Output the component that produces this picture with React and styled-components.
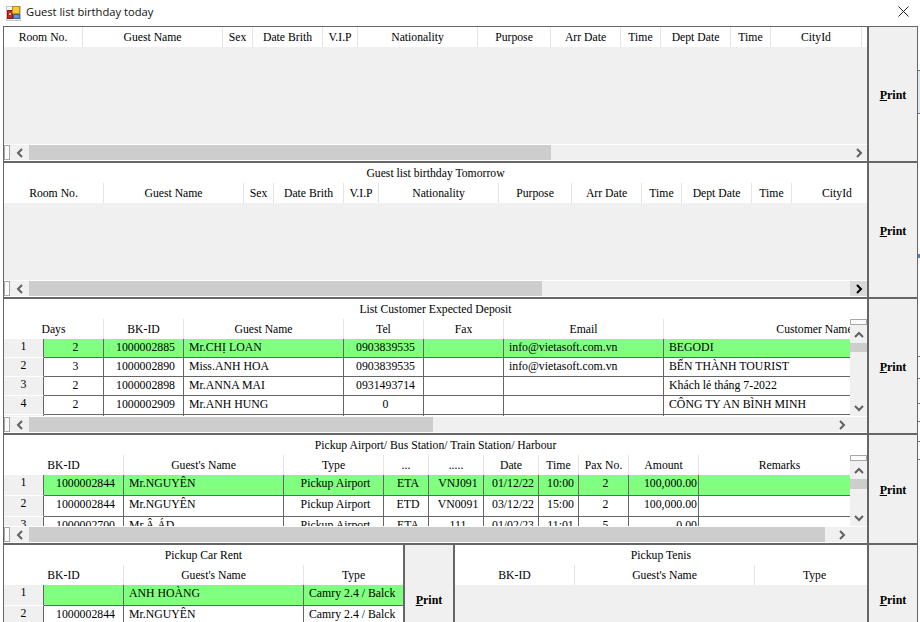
import React from 'react'
import styled, { createGlobalStyle } from 'styled-components'

const GlobalStyle = createGlobalStyle`
  html, body { margin: 0; padding: 0; background: #fff; }
  * { box-sizing: border-box; }
`

const customerRows = [
  ['1', '2', '1000002885', 'Mr.CHỊ LOAN', '0903839535', '', 'info@vietasoft.com.vn', 'BEGODI'],
  ['2', '3', '1000002890', 'Miss.ANH HOA', '0903839535', '', 'info@vietasoft.com.vn', 'BẾN THÀNH TOURIST'],
  ['3', '2', '1000002898', 'Mr.ANNA MAI', '0931493714', '', '', 'Khách lẻ tháng 7-2022'],
  ['4', '2', '1000002909', 'Mr.ANH HUNG', '0', '', '', 'CÔNG TY AN BÌNH MINH'],
  ['', '', '', '', '', '', '', ''],
]

const pickupRows = [
  ['1', '1000002844', 'Mr.NGUYÊN', 'Pickup Airport', 'ETA', 'VNJ091', '01/12/22', '10:00', '2', '100,000.00', ''],
  ['2', '1000002844', 'Mr.NGUYÊN', 'Pickup Airport', 'ETD', 'VN0091', '03/12/22', '15:00', '2', '100,000.00', ''],
  ['3', '1000002700', 'Mr.Â ÁD', 'Pickup Airport', 'ETA', '111', '01/02/23', '11:01', '5', '0.00', ''],
]

const carRows = [
  ['1', '', 'ANH HOÀNG', 'Camry 2.4 / Balck'],
  ['2', '1000002844', 'Mr.NGUYÊN', 'Camry 2.4 / Balck'],
]

const guestHeads = ['Room No.', 'Guest Name', 'Sex', 'Date Brith', 'V.I.P', 'Nationality', 'Purpose', 'Arr Date', 'Time', 'Dept Date', 'Time', 'CityId']
const guestTail = [140, 30, 70, 35, 120, 73, 70, 40, 70, 40, 91]

const customerTable = {
  heads: ['Days', 'BK-ID', 'Guest Name', 'Tel', 'Fax', 'Email', 'Customer Name'],
  headWidths: [100, 80, 160, 80, 80, 160, 302],
  widths: [40, 60, 80, 160, 80, 80, 160, 302],
  aligns: ['head', 'center', 'center', 'left', 'center', 'center', 'left', 'left'],
}

const pickupTable = {
  heads: ["BK-ID", "Guest's Name", 'Type', '...', '.....', 'Date', 'Time', 'Pax No.', 'Amount', 'Remarks'],
  headWidths: [120, 160, 100, 45, 55, 55, 40, 50, 70, 162],
  widths: [40, 80, 160, 100, 45, 55, 55, 40, 50, 70, 162],
  aligns: ['head', 'center', 'left', 'center', 'center', 'center', 'center', 'center', 'center', 'right', 'left'],
}

const carTable = {
  heads: ['BK-ID', "Guest's Name", 'Type'],
  headWidths: [120, 180, 100],
  widths: [40, 80, 180, 100],
  aligns: ['head', 'center', 'left', 'left'],
}

export default function App() {
  return (
    <Page>
      <GlobalStyle />
      <TitleBar>
        <AppIcon />
        <Caption>Guest list birthday today</Caption>
        <CloseIcon />
      </TitleBar>
      <Content>
        <Frame>
          <PanelRow $h={136}>
            <Section>
              <Body>
                <GridView>
                  <HeaderRow heads={guestHeads} widths={[79, ...guestTail]} />
                  <EmptyArea />
                </GridView>
              </Body>
              <HScroll thumb={522} />
            </Section>
            <PrintBox><PrintLabel /></PrintBox>
          </PanelRow>

          <PanelRow $h={136}>
            <Section>
              <Title>Guest list birthday Tomorrow</Title>
              <Body>
                <GridView>
                  <HeaderRow heads={guestHeads} widths={[100, ...guestTail]} />
                  <EmptyArea />
                </GridView>
              </Body>
              <HScroll thumb={513} active />
            </Section>
            <PrintBox><PrintLabel /></PrintBox>
          </PanelRow>

          <PanelRow $h={136}>
            <Section>
              <Title>List Customer Expected Deposit</Title>
              <Body>
                <GridView>
                  <HeaderRow heads={customerTable.heads} widths={customerTable.headWidths} />
                  <DataRows table={customerTable} rows={customerRows} rowHeight={19} />
                </GridView>
                <VScroll thumbHeight={9} />
              </Body>
              <HScroll thumb={404} corner />
            </Section>
            <PrintBox><PrintLabel /></PrintBox>
          </PanelRow>

          <PanelRow $h={110}>
            <Section>
              <Title>Pickup Airport/ Bus Station/ Train Station/ Harbour</Title>
              <Body>
                <GridView>
                  <HeaderRow heads={pickupTable.heads} widths={pickupTable.headWidths} />
                  <DataRows table={pickupTable} rows={pickupRows} rowHeight={21} />
                </GridView>
                <VScroll thumbHeight={10} />
              </Body>
              <HScroll thumb={796} corner />
            </Section>
            <PrintBox><PrintLabel /></PrintBox>
          </PanelRow>

          <PanelRow $h={110}>
            <Section $w={399}>
              <Title>Pickup Car Rent</Title>
              <Body>
                <GridView>
                  <HeaderRow heads={carTable.heads} widths={carTable.headWidths} />
                  <DataRows table={carTable} rows={carRows} rowHeight={21} />
                </GridView>
              </Body>
            </Section>
            <PrintBox $w={52} $both><PrintLabel /></PrintBox>
            <Section>
              <Title>Pickup Tenis</Title>
              <Body>
                <GridView>
                  <HeaderRow heads={carTable.heads} widths={[120, 180, 120]} />
                  <EmptyArea />
                </GridView>
              </Body>
            </Section>
            <PrintBox><PrintLabel /></PrintBox>
          </PanelRow>
        </Frame>
        <BehindWindow />
      </Content>
    </Page>
  )
}

function PrintLabel() {
  return <PrintText><u>P</u>rint</PrintText>
}

function HeaderRow({ heads, widths }) {
  return (
    <HeadRow>
      {heads.map((h, i) => <HeadCell key={i} $w={widths[i]}>{h}</HeadCell>)}
    </HeadRow>
  )
}

function DataRows({ table, rows, rowHeight }) {
  return (
    <Rows>
      {rows.map((row, r) => (
        <Row key={r} $h={rowHeight}>
          {row.map((value, c) => (
            table.aligns[c] === 'head'
              ? <RowHead key={c} $w={table.widths[c]}>{value}</RowHead>
              : <Cell key={c} $w={table.widths[c]} $align={table.aligns[c]} $on={r === 0}>{value}</Cell>
          ))}
        </Row>
      ))}
    </Rows>
  )
}

function Chevron({ dir, dark }) {
  const points = {
    left: '7,1 3,5 7,9',
    right: '3,1 7,5 3,9',
    up: '1,7 5,3 9,7',
    down: '1,3 5,7 9,3',
  }
  return (
    <svg width="10" height="10" viewBox="0 0 10 10">
      <polyline points={points[dir]} fill="none" stroke={dark ? '#000' : '#606060'} strokeWidth="2" />
    </svg>
  )
}

function HScroll({ thumb, active, corner }) {
  return (
    <HBar $corner={corner}>
      <TinyGrip />
      <HArrow><Chevron dir="left" /></HArrow>
      <HThumb $w={thumb} />
      <HSpacer />
      <HArrow $active={active}><Chevron dir="right" dark={active} /></HArrow>
    </HBar>
  )
}

function VScroll({ thumbHeight }) {
  return (
    <VBar>
      <VGrip />
      <VArrow><Chevron dir="up" /></VArrow>
      <VThumb $h={thumbHeight} />
      <VSpacer />
      <VArrow><Chevron dir="down" /></VArrow>
    </VBar>
  )
}

function AppIcon() {
  return (
    <AppSvg width="15" height="15" viewBox="0 0 15 15">
      <rect x="0.5" y="0.5" width="14" height="14" fill="#f4f4f4" stroke="#c8c8c8" />
      <rect x="1.5" y="4.5" width="5" height="8" fill="#c8281e" stroke="#8a1a14" />
      <rect x="3" y="7" width="2" height="2" fill="#f3c0a0" />
      <rect x="6.5" y="0.5" width="7" height="7" fill="#f8c832" stroke="#b88a18" />
      <rect x="7.5" y="8.5" width="6" height="4" fill="#5a94dc" stroke="#3a66a8" />
    </AppSvg>
  )
}

function CloseIcon() {
  return (
    <CloseSvg width="11" height="11" viewBox="0 0 11 11">
      <path d="M0.5 0.5 L10.5 10.5 M10.5 0.5 L0.5 10.5" stroke="#222" strokeWidth="1" fill="none" />
    </CloseSvg>
  )
}

const Page = styled.div`
  width: 920px;
  height: 622px;
  overflow: hidden;
  background: #fff;
  font-family: "Liberation Serif", "Times New Roman", serif;
  font-size: 11.7px;
  color: #000;
  display: flex;
  flex-direction: column;
`

const TitleBar = styled.div`
  height: 26px;
  flex: none;
  display: flex;
  align-items: center;
  padding: 0 11px 3px 6px;
`

const AppSvg = styled.svg`
  flex: none;
  margin-top: 3px;
`

const Caption = styled.div`
  font-family: "Open Sans", "Noto Sans", sans-serif;
  font-size: 11.2px;
  margin-left: 5px;
  flex: 1;
  color: #111;
`

const CloseSvg = styled.svg`
  flex: none;
`

const Content = styled.div`
  flex: 1;
  min-height: 0;
  display: flex;
  padding-left: 3px;
`

const Frame = styled.div`
  width: 915px;
  flex: none;
  display: flex;
  flex-direction: column;
  border-top: 1px solid #666;
  border-left: 1px solid #666;
  border-right: 1px solid #666;
`

const BehindWindow = styled.div`
  width: 2px;
  flex: none;
  margin-top: 18px;
  background: linear-gradient(to bottom,
    #fff 0, #fff 26px, #777 26px, #777 27px,
    #dfe8f0 27px, #dfe8f0 69px, #777 69px, #777 70px,
    #fff 70px, #fff 210px, #5a7ea8 210px, #5a7ea8 214px,
    #fff 214px, #fff 312px, #777 312px, #777 313px,
    #fff 313px, #fff 334px, #777 334px, #777 335px,
    #fff 335px, #fff 359px, #777 359px, #777 360px,
    #fff 360px, #fff 377px, #777 377px, #777 378px,
    #fff 378px, #fff 397px, #777 397px, #777 398px,
    #fff 398px, #fff 415px, #777 415px, #777 416px, #fff 416px);
`

const PanelRow = styled.div`
  height: ${p => p.$h}px;
  flex: none;
  display: flex;
  border-bottom: 2px solid #666;
`

const Section = styled.div`
  display: flex;
  flex-direction: column;
  min-width: 0;
  ${p => (p.$w ? `width: ${p.$w}px; flex: none;` : 'flex: 1;')}
`

const Title = styled.div`
  height: 20px;
  flex: none;
  display: flex;
  align-items: center;
  justify-content: center;
  background: #fff;
  white-space: nowrap;
`

const Body = styled.div`
  flex: 1;
  min-height: 0;
  display: flex;
`

const GridView = styled.div`
  flex: 1;
  min-width: 0;
  display: flex;
  flex-direction: column;
  overflow: hidden;
  background: #f0f0f0;
`

const HeadRow = styled.div`
  height: 20px;
  flex: none;
  display: flex;
  background: #fff;
`

const HeadCell = styled.div`
  width: ${p => p.$w}px;
  flex: none;
  display: flex;
  align-items: center;
  justify-content: center;
  border-right: 1px solid #e4e4e4;
  white-space: nowrap;
`

const EmptyArea = styled.div`
  flex: 1;
  background: #f0f0f0;
`

const Rows = styled.div`
  flex: 1;
  min-height: 0;
  overflow: hidden;
  background: #fff;
`

const Row = styled.div`
  height: ${p => p.$h}px;
  display: flex;
  font-size: 11.8px;
`

const RowHead = styled.div`
  width: ${p => p.$w}px;
  flex: none;
  background: #f0f0f0;
  border-bottom: 1px solid #fff;
  border-right: 1px solid #666;
  text-align: center;
  line-height: 14px;
`

const Cell = styled.div`
  width: ${p => p.$w}px;
  flex: none;
  display: flex;
  align-items: flex-start;
  line-height: 16px;
  overflow: hidden;
  white-space: nowrap;
  background: ${p => (p.$on ? '#80ff80' : '#fff')};
  border-right: 1px solid #666;
  border-bottom: 1px solid #666;
  justify-content: ${p => ({ left: 'flex-start', center: 'center', right: 'flex-end' }[p.$align])};
  padding: ${p => ({ left: '0 0 0 5px', center: '0 0 0 4px', right: '0 1px 0 0' }[p.$align])};
`

const HBar = styled.div`
  height: 17px;
  flex: none;
  display: flex;
  align-items: stretch;
  background: #f0f0f0;
  border-top: 1px solid #fff;
  border-bottom: 1px solid #fff;
  padding-right: ${p => (p.$corner ? 17 : 0)}px;
`

const TinyGrip = styled.div`
  width: 6px;
  flex: none;
  background: #fbfbfb;
  border: 1px solid #a8a8a8;
`

const HArrow = styled.div`
  width: 17px;
  margin-left: ${p => (p.$active ? 0 : 1)}px;
  flex: none;
  display: flex;
  align-items: center;
  justify-content: center;
  background: ${p => (p.$active ? '#dadada' : '#f0f0f0')};
`

const HThumb = styled.div`
  width: ${p => p.$w}px;
  flex: none;
  margin-left: 1px;
  background: #cdcdcd;
`

const HSpacer = styled.div`
  flex: 1;
`

const VBar = styled.div`
  width: 17px;
  flex: none;
  display: flex;
  flex-direction: column;
  align-items: stretch;
  background: #f0f0f0;
`

const VGrip = styled.div`
  height: 6px;
  flex: none;
  margin-bottom: 1px;
  background: #fbfbfb;
  border: 1px solid #a8a8a8;
`

const VArrow = styled.div`
  height: 17px;
  flex: none;
  display: flex;
  align-items: center;
  justify-content: center;
`

const VThumb = styled.div`
  height: ${p => p.$h}px;
  flex: none;
  background: #cdcdcd;
`

const VSpacer = styled.div`
  flex: 1;
`

const PrintBox = styled.div`
  width: ${p => p.$w || 50}px;
  flex: none;
  display: flex;
  align-items: center;
  justify-content: center;
  padding-top: 2px;
  background: #f0f0f0;
  border-left: 2px solid #666;
  ${p => (p.$both ? 'border-right: 2px solid #666;' : '')}
`

const PrintText = styled.div`
  font-weight: bold;
  font-size: 12px;
`
